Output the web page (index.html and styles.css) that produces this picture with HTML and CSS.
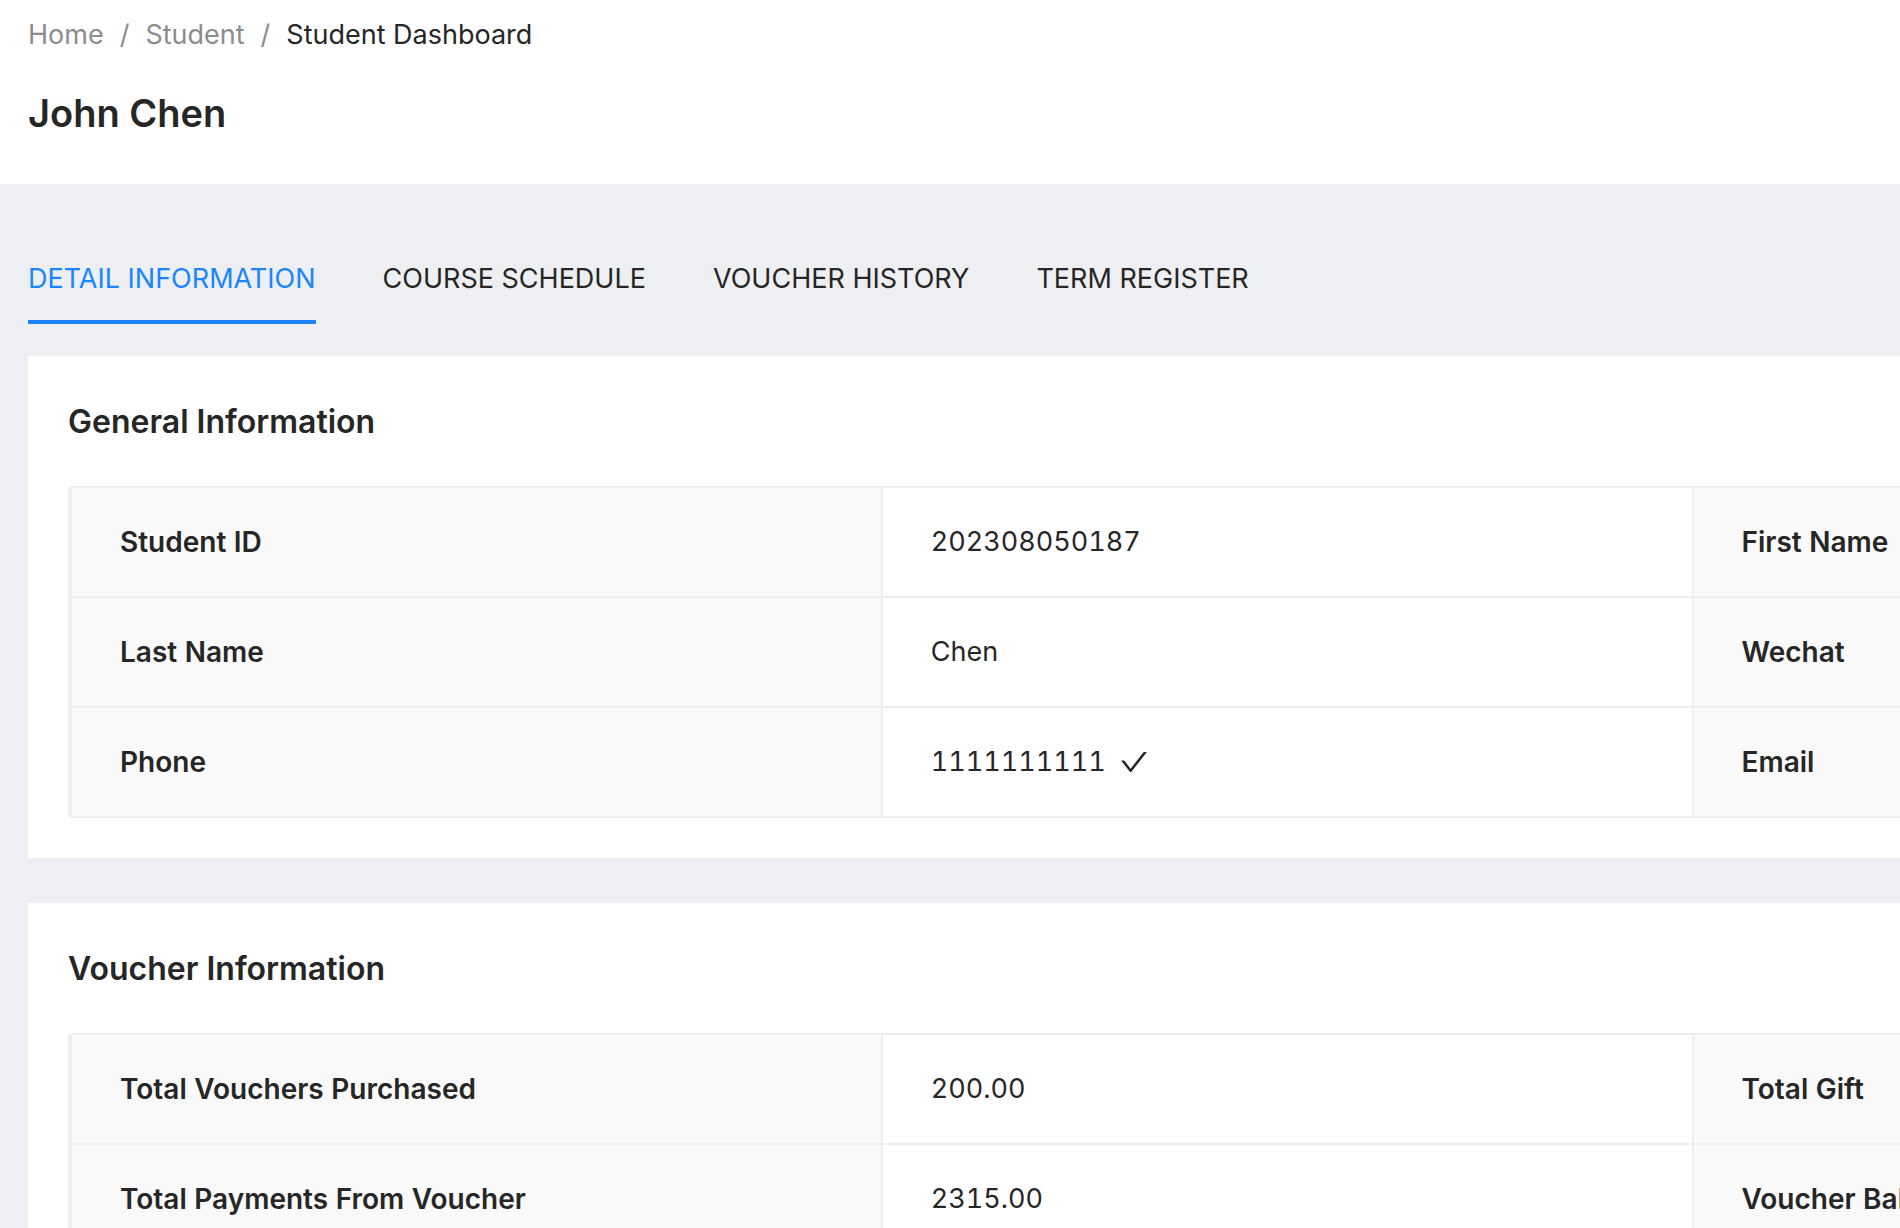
FILE: index.html
```html
<!doctype html>
<html lang="en">
<head>
    <meta charset="UTF-8">
    <meta name="viewport" content="width=device-width, initial-scale=1">
    <title>Student Dashboard</title>
    <link rel="stylesheet" href="styles.css">
</head>
<body>
    <header class="page-header">
        <nav class="breadcrumb" aria-label="Breadcrumb">
            <a href="#">Home</a>
            <span class="separator">/</span>
            <a href="#">Student</a>
            <span class="separator">/</span>
            <span class="current">Student Dashboard</span>
        </nav>
        <h1>John Chen</h1>
    </header>

    <main class="content">
        <div class="tabs" role="tablist">
            <button type="button" class="tab active" role="tab" aria-selected="true">DETAIL INFORMATION</button>
            <button type="button" class="tab" role="tab" aria-selected="false">COURSE SCHEDULE</button>
            <button type="button" class="tab" role="tab" aria-selected="false">VOUCHER HISTORY</button>
            <button type="button" class="tab" role="tab" aria-selected="false">TERM REGISTER</button>
        </div>

        <section class="card">
            <h2>General Information</h2>
            <div class="table-box">
                <table>
                    <tr>
                        <th scope="row">Student ID</th>
                        <td>202308050187</td>
                        <th scope="row">First Name</th>
                        <td></td>
                    </tr>
                    <tr>
                        <th scope="row">Last Name</th>
                        <td>Chen</td>
                        <th scope="row">Wechat</th>
                        <td></td>
                    </tr>
                    <tr>
                        <th scope="row">Phone</th>
                        <td>
                            <span class="verified">1111111111
                                <svg class="check" viewBox="64 64 896 896" fill="currentColor" aria-hidden="true">
                                    <path d="M912 190h-69.9c-9.8 0-19.1 4.5-25.1 12.2L404.7 724.5 207 474a32 32 0 0 0-25.1-12.2H112c-6.7 0-10.4 7.7-6.3 12.9l273.9 347c12.8 16.2 37.4 16.2 50.3 0l488.4-618.9c4.1-5.1.4-12.8-6.3-12.8z"/>
                                </svg>
                            </span>
                        </td>
                        <th scope="row">Email</th>
                        <td></td>
                    </tr>
                </table>
            </div>
        </section>

        <section class="card">
            <h2>Voucher Information</h2>
            <div class="table-box">
                <table>
                    <tr>
                        <th scope="row">Total Vouchers Purchased</th>
                        <td>200.00</td>
                        <th scope="row">Total Gift</th>
                        <td></td>
                    </tr>
                    <tr>
                        <th scope="row">Total Payments From Voucher</th>
                        <td>2315.00</td>
                        <th scope="row">Voucher Balance</th>
                        <td></td>
                    </tr>
                </table>
            </div>
        </section>
    </main>
</body>
</html>
```
FILE: styles.css
```css
* {
    box-sizing: border-box;
}
body {
    margin: 0;
    background-color: #eeeff3;
    color: #262626;
    font-family: Inter, "Liberation Sans", sans-serif;
    font-size: 27px;
    line-height: 44px;
    overflow-x: hidden;
}
.page-header {
    background-color: #fff;
    padding: 13px 28px 39px;
}
.breadcrumb {
    display: flex;
    gap: 16px;
    color: #8c8c8c;
}
.breadcrumb a {
    color: #8c8c8c;
    text-decoration: none;
}
.breadcrumb .current {
    color: #262626;
}
h1 {
    margin: 24px 0 0;
    font-size: 38px;
    font-weight: 600;
    line-height: 64px;
}
.content {
    padding: 48px 0 0 28px;
}
.tabs {
    display: flex;
    gap: 67px;
    margin-bottom: 32px;
    box-shadow: inset 0 -2px #f0f0f0;
}
.tab {
    padding: 25px 0 19px;
    border: none;
    border-bottom: 4px solid transparent;
    background: none;
    color: #262626;
    font: inherit;
    cursor: pointer;
}
.tab.active {
    color: #1a85ff;
    border-bottom-color: #1a85ff;
}
.card {
    margin-bottom: 45px;
    padding: 41px 0 40px 40px;
    background-color: #fff;
    overflow: hidden;
}
h2 {
    margin: 0 0 39px;
    font-size: 32px;
    font-weight: 600;
    line-height: 50px;
}
/* wider than the window, the last column is cut off by the card */
.table-box {
    width: 171vw;
    border: 2px solid #eee;
    border-left-width: 4px;
    border-radius: 4px;
}
table {
    width: 100%;
    table-layout: fixed;
    border-collapse: separate;
    border-spacing: 0;
    font-variant-numeric: tabular-nums;
}
th,
td {
    height: 110px;
    padding: 32px 48px;
    border-right: 2px solid #eee;
    border-bottom: 2px solid #eee;
    text-align: left;
}
th {
    background-color: #f9f9f9;
    font-size: 28px;
    font-weight: 600;
}
tr:last-child th,
tr:last-child td {
    height: 108px;
    border-bottom: none;
}
.verified {
    display: flex;
    align-items: center;
    gap: 14px;
}
.check {
    width: 28px;
    height: 28px;
}
```
